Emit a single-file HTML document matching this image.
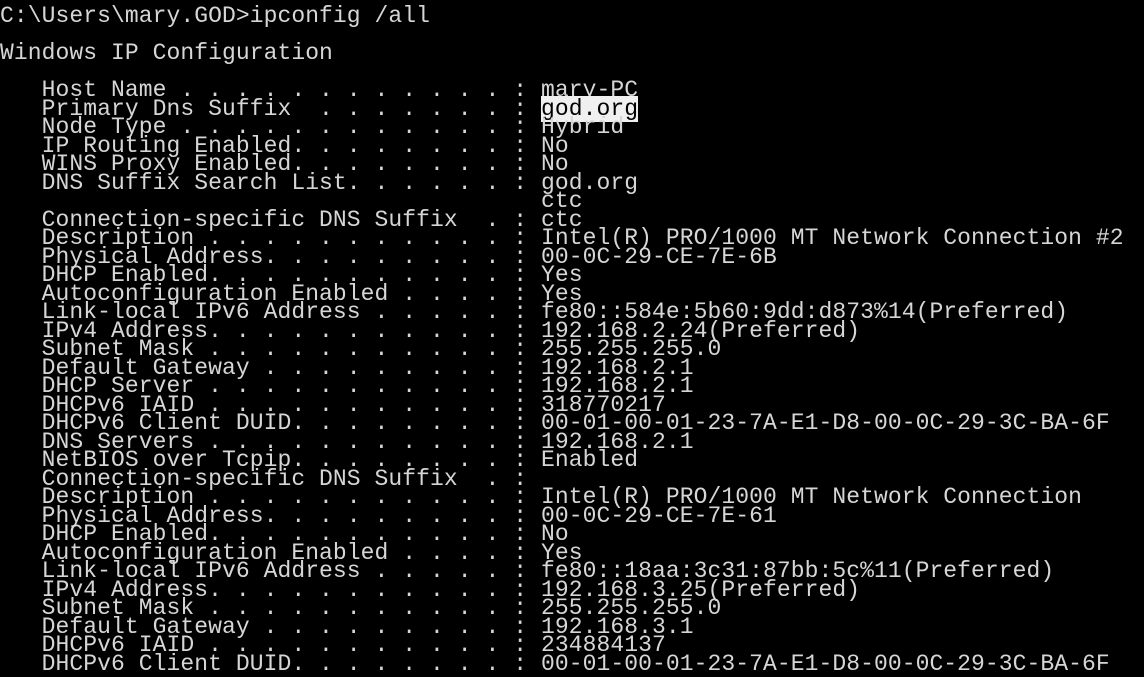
<!DOCTYPE html>
<html><head><style>
html,body{margin:0;padding:0;background:#000;width:1144px;height:669px;overflow:hidden}
pre{margin:0;position:absolute;left:0;top:7px;font-family:"Liberation Mono","DejaVu Sans Mono",monospace;font-size:23px;line-height:18.5px;color:#d6d6d6;white-space:pre;letter-spacing:0.07px}
.h{background:#f0f0f0;color:#000}
</style></head><body>
<pre>C:\Users\mary.GOD&gt;ipconfig /all

Windows IP Configuration

   Host Name . . . . . . . . . . . . : mary-PC
   Primary Dns Suffix  . . . . . . . : <span class="h">god.org</span>
   Node Type . . . . . . . . . . . . : Hybrid
   IP Routing Enabled. . . . . . . . : No
   WINS Proxy Enabled. . . . . . . . : No
   DNS Suffix Search List. . . . . . : god.org
                                       ctc
   Connection-specific DNS Suffix  . : ctc
   Description . . . . . . . . . . . : Intel(R) PRO/1000 MT Network Connection #2
   Physical Address. . . . . . . . . : 00-0C-29-CE-7E-6B
   DHCP Enabled. . . . . . . . . . . : Yes
   Autoconfiguration Enabled . . . . : Yes
   Link-local IPv6 Address . . . . . : fe80::584e:5b60:9dd:d873%14(Preferred)
   IPv4 Address. . . . . . . . . . . : 192.168.2.24(Preferred)
   Subnet Mask . . . . . . . . . . . : 255.255.255.0
   Default Gateway . . . . . . . . . : 192.168.2.1
   DHCP Server . . . . . . . . . . . : 192.168.2.1
   DHCPv6 IAID . . . . . . . . . . . : 318770217
   DHCPv6 Client DUID. . . . . . . . : 00-01-00-01-23-7A-E1-D8-00-0C-29-3C-BA-6F
   DNS Servers . . . . . . . . . . . : 192.168.2.1
   NetBIOS over Tcpip. . . . . . . . : Enabled
   Connection-specific DNS Suffix  . :
   Description . . . . . . . . . . . : Intel(R) PRO/1000 MT Network Connection
   Physical Address. . . . . . . . . : 00-0C-29-CE-7E-61
   DHCP Enabled. . . . . . . . . . . : No
   Autoconfiguration Enabled . . . . : Yes
   Link-local IPv6 Address . . . . . : fe80::18aa:3c31:87bb:5c%11(Preferred)
   IPv4 Address. . . . . . . . . . . : 192.168.3.25(Preferred)
   Subnet Mask . . . . . . . . . . . : 255.255.255.0
   Default Gateway . . . . . . . . . : 192.168.3.1
   DHCPv6 IAID . . . . . . . . . . . : 234884137
   DHCPv6 Client DUID. . . . . . . . : 00-01-00-01-23-7A-E1-D8-00-0C-29-3C-BA-6F</pre>
</body></html>
